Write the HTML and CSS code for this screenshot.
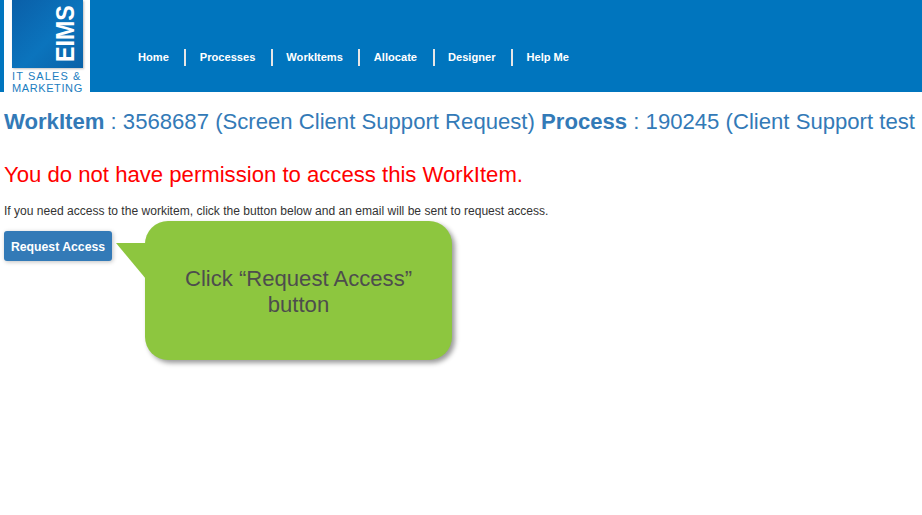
FILE: index.html
```html
<!DOCTYPE html>
<html lang="en">
<head>
<meta charset="utf-8">
<title>WorkItem</title>
<link rel="stylesheet" href="styles.css">
</head>
<body>
<header class="header">
  <div class="logo">
    <div class="logo-square"><span class="logo-eims">EIMS</span></div>
    <div class="logo-text"><span class="logo-line-one">IT SALES &amp;</span><br><span class="logo-line-two">MARKETING</span></div>
  </div>
  <nav class="nav">
    <a class="nav-item">Home</a>
    <a class="nav-item">Processes</a>
    <a class="nav-item">WorkItems</a>
    <a class="nav-item">Allocate</a>
    <a class="nav-item">Designer</a>
    <a class="nav-item">Help Me</a>
  </nav>
</header>
<main class="content">
  <h1 class="title"><b>WorkItem</b> : 3568687 (Screen Client Support Request) <b>Process</b> : 190245 (Client Support test</h1>
  <h2 class="error">You do not have permission to access this WorkItem.</h2>
  <p class="hint">If you need access to the workitem, click the button below and an email will be sent to request access.</p>
  <button class="btn">Request Access</button>
</main>
<div class="callout">
  <svg class="callout-tail" width="30" height="36" viewBox="0 0 30 36"><polygon points="0,0 30,0 30,36" fill="#8dc63f"/></svg>
  <div class="callout-text">Click “Request Access”<br>button</div>
</div>
</body>
</html>
```
FILE: styles.css
```css
html, body { margin: 0; padding: 0; }
body {
  width: 922px;
  height: 515px;
  overflow: hidden;
  background: #fff;
  font-family: "Liberation Sans", Arial, sans-serif;
  position: relative;
}
.header {
  height: 92px;
  background: #0075be;
  display: flex;
}
.logo {
  width: 86px;
  margin-left: 4px;
  background: #fff;
  box-sizing: border-box;
  padding-left: 8px;
  flex: none;
}
.logo-square {
  width: 71px;
  height: 68px;
  background: linear-gradient(135deg, #0a5fa8, #0b74bd 55%, #0a62a8);
  box-shadow: 1px 1px 2px rgba(0,0,0,.25);
  position: relative;
}
.logo-eims {
  position: absolute;
  right: 7px;
  bottom: 4px;
  color: #fff;
  font-weight: bold;
  font-size: 25px;
  line-height: 22px;
  writing-mode: vertical-rl;
  transform: rotate(180deg) scale(1, .93);
}
.logo-text {
  margin: 2px 0 0 0;
  color: #1a7dc0;
  font-size: 11px;
  line-height: 12px;
  white-space: nowrap;
}
.logo-line-one {
  letter-spacing: 1.1px;
}
.logo-line-two {
  letter-spacing: 0.6px;
}
.nav {
  display: flex;
  align-items: center;
  margin-left: 33px;
  padding-top: 22px;
  height: 70px;
}
.nav-item {
  color: #fff;
  font-size: 11.1px;
  font-weight: bold;
  padding: 0 15.5px 0 13.5px;
  line-height: 17px;
  border-left: 2px solid #e6e6e6;
}
.nav-item:first-child {
  border-left: 0;
  padding-left: 15px;
}
.content {
  padding: 0 0 0 4px;
}
.title {
  margin: 17px 0 0;
  font-size: 22.13px;
  line-height: 26px;
  font-weight: normal;
  color: #337ab7;
  white-space: nowrap;
}
.error {
  margin: 27px 0 0;
  font-size: 22.13px;
  line-height: 26px;
  font-weight: normal;
  color: #ff0000;
}
.hint {
  margin: 15px 0 0;
  font-size: 12.07px;
  line-height: 17px;
  color: #333;
}
.btn {
  display: block;
  margin-top: 11px;
  width: 108px;
  height: 30px;
  padding: 2px 0 0;
  border: 0;
  border-radius: 3px;
  background: #337ab7;
  color: #fff;
  font-family: inherit;
  font-size: 12.25px;
  font-weight: bold;
  box-shadow: 1px 1px 4px rgba(0,0,0,.25);
}
.callout {
  position: absolute;
  left: 145px;
  top: 221px;
  width: 307px;
  height: 139px;
  background: #8dc63f;
  border-radius: 23px;
  box-shadow: 3px 3px 5px rgba(0,0,0,.4);
  display: flex;
  align-items: center;
  justify-content: center;
}
.callout-tail {
  position: absolute;
  left: -29px;
  top: 22px;
}
.callout-text {
  color: #4d4d4d;
  font-size: 22.1px;
  line-height: 26px;
  text-align: center;
  position: relative;
  top: 1px;
}
```
